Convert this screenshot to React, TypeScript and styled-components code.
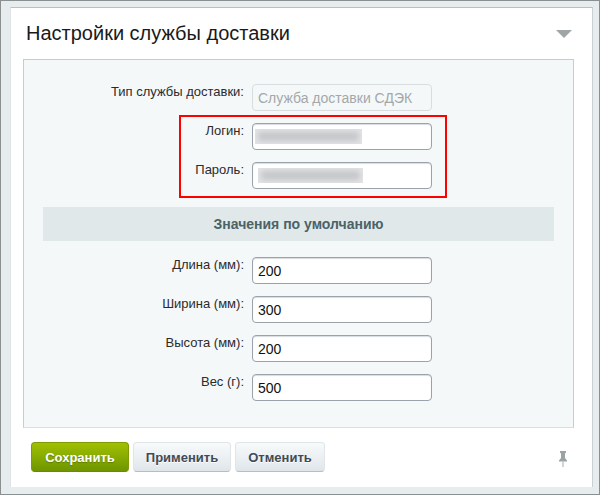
import React from 'react';
import styled, { createGlobalStyle } from 'styled-components';

const GlobalStyle = createGlobalStyle`
  html, body {
    margin: 0;
    padding: 0;
    background: #e7edee;
  }
  body {
    font-family: "Liberation Sans", Arial, sans-serif;
  }
`;

const Frame = styled.div`
  position: relative;
  box-sizing: border-box;
  width: 600px;
  height: 495px;
  padding: 6px 6px 7px 9px;
  background: #e7edee;
  border: 1px solid #8a8f8f;
`;

const Card = styled.div`
  box-sizing: border-box;
  height: 100%;
  background: #fff;
  border-top: 1px solid #b9c0c2;
  border-left: 1px solid #dfe5e6;
  border-right: 1px solid #c9d1d3;
  padding: 0 18px 0 12px;
  display: flex;
  flex-direction: column;
`;

const Header = styled.div`
  display: flex;
  align-items: center;
  justify-content: space-between;
  height: 51px;
  padding: 0 2px 0 3px;
`;

const Title = styled.h1`
  margin: 0;
  font-size: 20px;
  font-weight: 400;
  color: #1a1a1a;
`;

const Panel = styled.div`
  box-sizing: border-box;
  height: 369px;
  padding: 24px 19px 0;
  background: #f5f8f9;
  border: 1px solid #c4cdd0;
  border-bottom-color: #d5e0e6;
  display: flex;
  flex-direction: column;
`;

const Fields = styled.div`
  display: flex;
  flex-direction: column;
  gap: 12px;
`;

const Row = styled.div`
  display: flex;
  gap: 8px;
`;

const Label = styled.div`
  width: 201px;
  text-align: right;
  font-size: 13px;
  line-height: 15px;
  color: #2b2b2b;
`;

const InputBox = styled.div<{ $disabled?: boolean }>`
  box-sizing: border-box;
  width: 180px;
  height: 27px;
  padding: 0 5px;
  display: flex;
  align-items: center;
  font-size: 14px;
  background: ${({ $disabled }) => ($disabled ? '#f5f8f9' : '#fff')};
  color: ${({ $disabled }) => ($disabled ? '#a3a8a9' : '#111')};
  border: 1px solid ${({ $disabled }) => ($disabled ? '#d8dee0' : '#9aa2ab')};
  border-radius: 4px;
  box-shadow: ${({ $disabled }) => ($disabled ? 'none' : 'inset 0 1px 1px #d8dcde')};
`;

// blurred-out credentials: hard edged patch with a soft smear inside
const Blurred = styled.div<{ $width: number; $shift: number }>`
  width: ${({ $width }) => $width}px;
  height: 15px;
  margin-left: ${({ $shift }) => $shift}px;
  background: #e4e5e7;
  overflow: hidden;

  &::before {
    content: '';
    display: block;
    height: 9px;
    margin: 3px 3px;
    background: #c2c4c7;
    filter: blur(3px);
  }
`;

const SectionBar = styled.div`
  height: 34px;
  margin: 18px 0 16px;
  background: #e0e8ea;
  display: flex;
  align-items: center;
  justify-content: center;
  font-size: 14px;
  font-weight: 700;
  color: #4b6267;
`;

const Footer = styled.div`
  display: flex;
  align-items: center;
  justify-content: space-between;
  padding: 14px 7px 0 8px;
`;

const Buttons = styled.div`
  display: flex;
  gap: 4px;
`;

const Button = styled.button<{ $primary?: boolean; $width: number }>`
  box-sizing: border-box;
  width: ${({ $width }) => $width}px;
  height: 30px;
  padding: 0;
  font-family: inherit;
  font-size: 13px;
  font-weight: 700;
  border-radius: 4px;
  color: ${({ $primary }) => ($primary ? '#fff' : '#3f4b54')};
  text-shadow: ${({ $primary }) => ($primary ? '0 1px 1px #5f7d00' : '0 1px 0 #fff')};
  border: 1px solid ${({ $primary }) => ($primary ? '#7c9b00' : '#dfe5e8')};
  border-bottom-color: ${({ $primary }) => ($primary ? '#6c8a00' : '#b4bec3')};
  background: ${({ $primary }) =>
    $primary
      ? 'linear-gradient(to bottom, #a0c000, #6f9500)'
      : 'linear-gradient(to bottom, #f8fafb, #dfe6ea)'};
`;

const Highlight = styled.div`
  position: absolute;
  left: 178px;
  top: 114px;
  width: 268px;
  height: 83px;
  box-sizing: border-box;
  border: 2px solid #f00;
`;

const PinIcon = styled.svg`
  margin-top: 4px;
`;

const Arrow = () => (
  <svg width="16" height="8" viewBox="0 0 16 8">
    <path d="M0 0H16L8 8Z" fill="#a0a5a8" />
  </svg>
);

const Pin = () => (
  <PinIcon width="8" height="16" viewBox="0 0 8 16">
    <path d="M1 0H7V1.5L6 2.5V7L8 9.5V10.5H0V9.5L2 7V2.5L1 1.5Z" fill="#9aa2a5" />
    <rect x="3.5" y="10.5" width="1" height="5.5" fill="#a5acaf" />
  </PinIcon>
);

const App: React.FC = () => (
  <>
    <GlobalStyle />
    <Frame>
      <Card>
        <Header>
          <Title>Настройки службы доставки</Title>
          <Arrow />
        </Header>
        <Panel>
          <Fields>
            <Row>
              <Label>Тип службы доставки:</Label>
              <InputBox $disabled>Служба доставки СДЭК</InputBox>
            </Row>
            <Row>
              <Label>Логин:</Label>
              <InputBox>
                <Blurred $width={107} $shift={-3} />
              </InputBox>
            </Row>
            <Row>
              <Label>Пароль:</Label>
              <InputBox>
                <Blurred $width={105} $shift={0} />
              </InputBox>
            </Row>
          </Fields>
          <SectionBar>Значения по умолчанию</SectionBar>
          <Fields>
            <Row>
              <Label>Длина (мм):</Label>
              <InputBox>200</InputBox>
            </Row>
            <Row>
              <Label>Ширина (мм):</Label>
              <InputBox>300</InputBox>
            </Row>
            <Row>
              <Label>Высота (мм):</Label>
              <InputBox>200</InputBox>
            </Row>
            <Row>
              <Label>Вес (г):</Label>
              <InputBox>500</InputBox>
            </Row>
          </Fields>
        </Panel>
        <Footer>
          <Buttons>
            <Button $primary $width={98}>Сохранить</Button>
            <Button $width={98}>Применить</Button>
            <Button $width={90}>Отменить</Button>
          </Buttons>
          <Pin />
        </Footer>
      </Card>
      <Highlight />
    </Frame>
  </>
);

export default App;
